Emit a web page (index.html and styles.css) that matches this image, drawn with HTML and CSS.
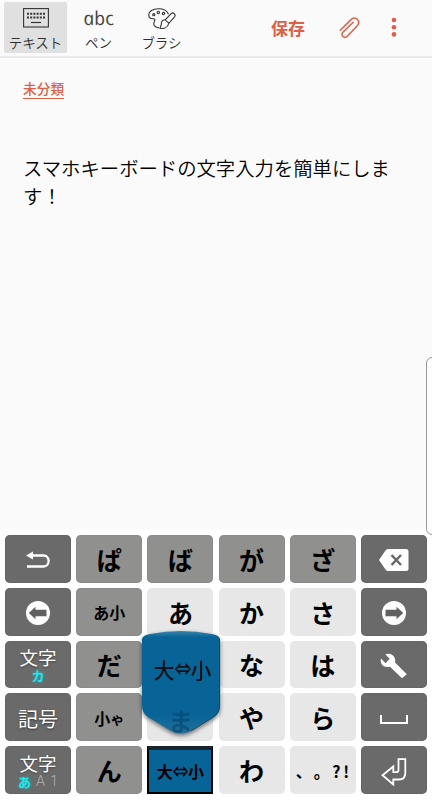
FILE: index.html
```html
<!DOCTYPE html>
<html lang="ja">
<head>
<meta charset="utf-8">
<title>メモ</title>
<link rel="stylesheet" href="styles.css">
</head>
<body>
<div class="app">
  <header class="toolbar">
    <button class="tool tool-active">
      <svg class="tool-icon" width="26" height="20" viewBox="0 0 26 20" fill="none" stroke="#333" stroke-width="1.1">
        <rect x=".6" y=".6" width="24.8" height="18.4"/>
        <path d="M4 5.7h18M4 9.5h18" stroke-width="2" stroke-dasharray="2 1.2"/>
        <path d="M8 14.5h10" stroke-width="1.2"/>
      </svg>
      <span class="tool-label">テキスト</span>
    </button>
    <button class="tool tool-pen">
      <span class="abc">abc</span>
      <span class="tool-label">ペン</span>
    </button>
    <button class="tool tool-brush">
      <svg class="tool-icon" width="28" height="22" viewBox="0 0 28 22" fill="none" stroke="#333" stroke-width="1.1">
        <path d="M20.5 6.2C19 2.8 15 .8 10.500 .8 4.800 .8 .7 3.300 .7 6.800c0 2.800 1.900 4.200 4.200 3.900 2.100-.2 2.500 1 1.300 3.200-1.500 2.900 .4 5.500 5.300 6.100"/>
        <circle cx="5.800" cy="6.700" r="1.100"/><circle cx="10.300" cy="4.500" r="1.200"/><circle cx="15.500" cy="5.600" r="1.200"/>
        <path d="M23.200 5.600 17.200 11.800l3.600 3.500 5.800-6.500c1.500-2.200-1.400-5-3.400-3.200zM17.200 11.800c-2.600.1-4 1.500-3.900 4.700l-1.200 3.800c3.500.7 7.500-.7 8.700-5"/>
      </svg>
      <span class="tool-label">ブラシ</span>
    </button>
    <button class="save">保存</button>
    <svg class="clip" width="22" height="22" viewBox="0 0 22 22" fill="none" stroke="#dc6047" stroke-width="1.5" stroke-linecap="round">
      <path d="M1.300 13.300 12 2.600c4.600-4.200 10.300 1.700 6.300 6.100L8.300 19.200c-3.200 3-7-.9-4.400-3.900L14.200 5.300"/>
    </svg>
    <svg class="more" width="6" height="20" viewBox="0 0 6 20" fill="#dc6047">
      <circle cx="3" cy="3" r="2.300"/><circle cx="3" cy="10.200" r="2.300"/><circle cx="3" cy="17.400" r="2.300"/>
    </svg>
  </header>

  <main class="note">
    <span class="category">未分類</span>
    <p class="text">スマホキーボードの文字入力を簡単にします！</p>
    <div class="edge-panel"></div>
  </main>

  <section class="keyboard">
    <button class="key dark"><svg width="24" height="18" viewBox="0 0 24 18" fill="none" stroke="#fff" stroke-width="2.300"><path d="M5 4.500h12.500c6.800 0 6.800 11 0 11H1"/><path d="M7 .5v8L0 4.500z" fill="#fff" stroke="none"/></svg></button>
    <button class="key mid">ぱ</button>
    <button class="key mid">ば</button>
    <button class="key mid">が</button>
    <button class="key mid">ざ</button>
    <button class="key dark"><svg width="30" height="22" viewBox="0 0 30 22"><path d="M9 0h18q2.500 0 2.500 2.500v17q0 2.500-2.500 2.500H9Q7.500 22 6.500 20.500L0 11 6.500 1.500Q7.500 0 9 0z" fill="#fff"/><path d="m12.500 6 9.500 10m0-10-9.500 10" stroke="#686868" stroke-width="2.500"/></svg></button>

    <button class="key dark"><svg width="24" height="24" viewBox="0 0 24 24"><circle cx="12" cy="12" r="12" fill="#fff"/><path d="M2.800 12 9.500 5.800v3h11v6.500h-11v3z" fill="#606060"/></svg></button>
    <button class="key mid small">あ小</button>
    <button class="key light">あ</button>
    <button class="key light">か</button>
    <button class="key light">さ</button>
    <button class="key dark"><svg width="24" height="24" viewBox="0 0 24 24"><circle cx="12" cy="12" r="12" fill="#fff"/><path d="M21.200 12 14.500 5.800v3h-11v6.500h11v3z" fill="#606060"/></svg></button>

    <button class="key dark mode"><span class="mode-name">文字</span><span class="mode-sub"><b class="glow">カ</b></span></button>
    <button class="key mid">だ</button>
    <button class="key light"></button>
    <button class="key light">な</button>
    <button class="key light">は</button>
    <button class="key dark"><svg width="28" height="26" viewBox="0 0 28 26"><path d="M9 .7 5.300 1.200l4.300 4.600-4 4.400L1 5.500C-.5 11 4 15.500 10 13.700L22 25.300l4.800-4.100L15 9.500C16 5 13.500 1.500 9 .7z" fill="#fff"/></svg></button>

    <button class="key dark symbols">記号</button>
    <button class="key mid small">小<span class="tiny">ゃ</span></button>
    <button class="key light"></button>
    <button class="key light">や</button>
    <button class="key light">ら</button>
    <button class="key dark"><svg class="space" width="28" height="10" viewBox="0 0 28 10" fill="none" stroke="#fff" stroke-width="2"><path d="M1 0v8h26V0"/></svg></button>

    <button class="key dark mode"><span class="mode-name">文字</span><span class="mode-sub"><b class="glow">あ</b><span>A</span><span>1</span></span></button>
    <button class="key mid">ん</button>
    <button class="key pressed">大<svg class="swap" width="15" height="11" viewBox="0 0 15 11" fill="none" stroke="#000" stroke-width="1.400"><path d="M5 .7.900 5.500 5 10.300M10 .7l4.100 4.800L10 10.300M3 3.500h9M3 7.500h9"/></svg>小</button>
    <button class="key light">わ</button>
    <button class="key light punct"><span>、</span><span>。</span><span>?</span><span>!</span></button>
    <button class="key dark"><svg class="enter" width="26" height="28" viewBox="0 0 26 28" fill="none" stroke="#fff" stroke-width="1.800"><path d="M17.500 1.200h6.800V15q0 6.500-6.500 6.500h-5.500v5L1.500 17.300 12.300 8.500v5.700h3q2.200 0 2.200-2.200z"/></svg></button>

    <div class="bubble">
      <svg class="bubble-shape" width="78" height="105" viewBox="0 0 78 105">
        <defs><linearGradient id="blue" x1="0" y1="0" x2="0" y2="1"><stop offset="0" stop-color="#3d86ad"/><stop offset=".06" stop-color="#086497"/><stop offset=".82" stop-color="#086497"/><stop offset="1" stop-color="#23719a"/></linearGradient></defs>
        <path d="M0 8Q1 4 8 3 39-3 70 3q7 1 8 5v67q0 7-6 11L49 100q-10 5-20 0L6 86q-6-4-6-11z" fill="url(#blue)"/>
        <path d="M77.500 8v67q0 7-6 11L49 100" fill="none" stroke="#16384c" stroke-opacity=".65"/>
      </svg>
      <span class="ghost">ま</span>
      <span class="bubble-text">大<svg class="swap" width="16" height="12" viewBox="0 0 15 11" fill="none" stroke="#07141c" stroke-width="1.500"><path d="M5 .7.900 5.500 5 10.300M10 .7l4.100 4.800L10 10.300M3 3.500h9M3 7.500h9"/></svg>小</span>
    </div>
  </section>
</div>
</body>
</html>
```
FILE: styles.css
```css
* { box-sizing: border-box; }
body { margin: 0; font-family: "Noto Sans CJK JP", sans-serif; background: #fafafa; }
button { border: 0; margin: 0; padding: 0; font: inherit; background: none; color: inherit; }
svg { display: block; flex: none; }

.app { width: 432px; height: 800px; display: flex; flex-direction: column; overflow: hidden; }

.toolbar { height: 58px; flex: none; display: flex; align-items: flex-start; border-bottom: 2px solid #e9e9e9; padding: 2px 0 0 4px; }
.tool { width: 63px; height: 51px; display: flex; flex-direction: column; align-items: center; justify-content: space-between; padding: 6px 0 2px; border-radius: 2px; color: #303030; }
.tool-active { background: #e0e0e0; }
.tool-label { font-size: 13.5px; line-height: 18px; font-weight: 350; white-space: nowrap; }
.abc { font: italic 19px/20px "Open Sans", sans-serif; transform: skewX(12deg); color: #444; }
.save { margin: 14px 0 0 77px; width: 36px; font-size: 17px; line-height: 24px; font-weight: 700; color: #dc6047; white-space: nowrap; }
.clip { margin: 15px 0 0 33px; }
.more { margin: 15px 0 0 30px; }

.note { position: relative; height: 471px; flex: none; padding: 21px 23px 0; }
.category { display: block; width: 41px; height: 20px; font-size: 13.7px; line-height: 18px; font-weight: 500; color: #dc6047; border-bottom: 1px solid #dc6047; white-space: nowrap; }
.text { width: 370px; margin: 56px 0 0; font-size: 19.35px; line-height: 27.5px; font-weight: 350; color: #000; word-break: break-all; }
.edge-panel { position: absolute; right: -8px; top: 299px; width: 14px; height: 178px; border: 1px solid #999; border-radius: 6px; background: #fcfcfc; z-index: 1; }

.keyboard { position: relative; flex: 1; display: grid; grid-template-columns: repeat(6, 1fr); grid-template-rows: repeat(5, 1fr); gap: 4.8px 5.3px; padding: 6px 5px; background: #fff; }
.key { min-width: 0; min-height: 0; display: flex; align-items: center; justify-content: center; border-radius: 5px; font-size: 25px; line-height: 1; font-weight: 700; color: #000; white-space: nowrap; padding-top: 1px; }
.dark { background: #6a6a6a; box-shadow: inset 0 0 1px #444; color: #fff; padding-top: 3px; }
.mid { background: #90908f; box-shadow: inset 0 0 1px #666; }
.light { background: #e7e7e7; }
.small { font-size: 16px; }
.tiny { font-size: 14px; }
.symbols { font-size: 20px; font-weight: 400; text-shadow: 0 1px 2px #333; }
.mode { flex-direction: column; padding: 0; }
.mode-name { font-size: 18.500px; line-height: 22px; font-weight: 400; text-shadow: 0 1px 2px #444; }
.mode-sub { display: flex; gap: 5px; align-items: center; font: 300 14.5px/15px Roboto, sans-serif; color: #b0b0b0; }
.glow { font: 700 13px/15px "Noto Sans CJK JP", sans-serif; color: #24e5e9; text-shadow: 0 0 3px #13bfc6; }
.space { margin-top: 3px; }
.pressed { background: #086497; border: 2px solid #000; border-top: 4px solid #1a252d; border-radius: 0; font-size: 16px; padding-top: 0; }
.punct { font: 700 16px/1 "Noto Sans CJK JP", sans-serif; display: grid; grid-template-columns: 18px 18px 11px 9px; }

.bubble { position: absolute; left: 142px; top: 101.500px; width: 78px; height: 105px; filter: drop-shadow(0 2px 2px #0008); }
.bubble-shape { position: absolute; left: 0; top: 0; }
.ghost { position: absolute; left: 26px; top: 77px; font-size: 25px; line-height: 25px; font-weight: 700; color: #003c64; opacity: .5; }
.bubble-text { position: absolute; left: 3px; right: 0; top: 28px; display: flex; align-items: center; justify-content: center; font-size: 21px; line-height: 21px; font-weight: 500; color: #07141c; }
```
